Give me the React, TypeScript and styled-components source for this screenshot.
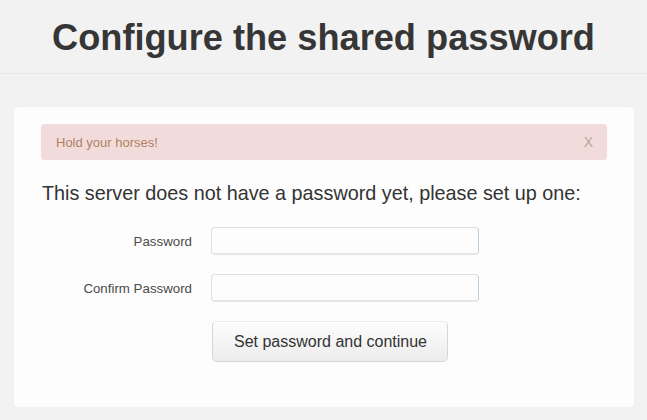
import React from "react";
import styled, { createGlobalStyle } from "styled-components";

const Global = createGlobalStyle`
  html, body {
    margin: 0;
    padding: 0;
    background: #f2f2f2;
    font-family: "Liberation Sans", Arial, sans-serif;
  }
  * { box-sizing: border-box; }
`;

const Page = styled.div`
  width: 647px;
  height: 420px;
  background: #f2f2f2;
  overflow: hidden;
`;

const Header = styled.header`
  height: 74px;
  border-bottom: 1px solid #e6e8e8;
  display: flex;
  align-items: center;
  justify-content: center;
`;

const Title = styled.h1`
  margin: 0;
  padding-top: 3px;
  font-size: 36.2px;
  font-weight: bold;
  color: #363636;
  line-height: 1;
`;

const Card = styled.section`
  margin: 33px 13px 0 14px;
  height: 300px;
  background: #fdfdfd;
  border-radius: 4px;
  padding: 17px 27px 0 27px;
`;

const Alert = styled.div`
  height: 36px;
  background: #f2dcdb;
  border-radius: 3px;
  display: flex;
  align-items: center;
  justify-content: space-between;
  padding: 0 14px 0 15px;
  font-size: 13px;
  color: #b07f62;
`;

const Close = styled.span`
  font-size: 14px;
  color: #b3a69c;
`;

const Lead = styled.p`
  margin: 22px 0 22px 1px;
  font-size: 19.8px;
  line-height: 23px;
  color: #333;
`;

const Form = styled.form`
  display: grid;
  grid-template-columns: 151px 268px;
  column-gap: 19px;
  row-gap: 19px;
  align-items: center;
`;

const Label = styled.label`
  text-align: right;
  font-size: 13.3px;
  color: #4a4a4a;
`;

const Input = styled.input`
  height: 28px;
  width: 268px;
  border: 1px solid #e3dcdc;
  border-right-color: #bcd0e0;
  border-bottom: 2px solid #e6e6e6;
  border-radius: 4px;
  background: #fdfdfd;
  outline: none;
`;

const Button = styled.button`
  grid-column: 2;
  justify-self: start;
  margin-left: 1px;
  height: 41px;
  padding: 0 20px 0 21px;
  font-family: "Liberation Sans", Arial, sans-serif;
  font-size: 16px;
  color: #333;
  border: 1px solid #d6d6d6;
  border-top-color: #ececec;
  border-bottom-color: #cdd5dc;
  border-radius: 5px;
  background: linear-gradient(#fdfdfd, #ececec);
`;

export default function App() {
  return (
    <Page>
      <Global />
      <Header>
        <Title>Configure the shared password</Title>
      </Header>
      <Card>
        <Alert>
          <span>Hold your horses!</span>
          <Close>X</Close>
        </Alert>
        <Lead>This server does not have a password yet, please set up one:</Lead>
        <Form onSubmit={(e) => e.preventDefault()}>
          <Label htmlFor="pw">Password</Label>
          <Input id="pw" type="password" />
          <Label htmlFor="pw2">Confirm Password</Label>
          <Input id="pw2" type="password" />
          <Button type="submit">Set password and continue</Button>
        </Form>
      </Card>
    </Page>
  );
}
